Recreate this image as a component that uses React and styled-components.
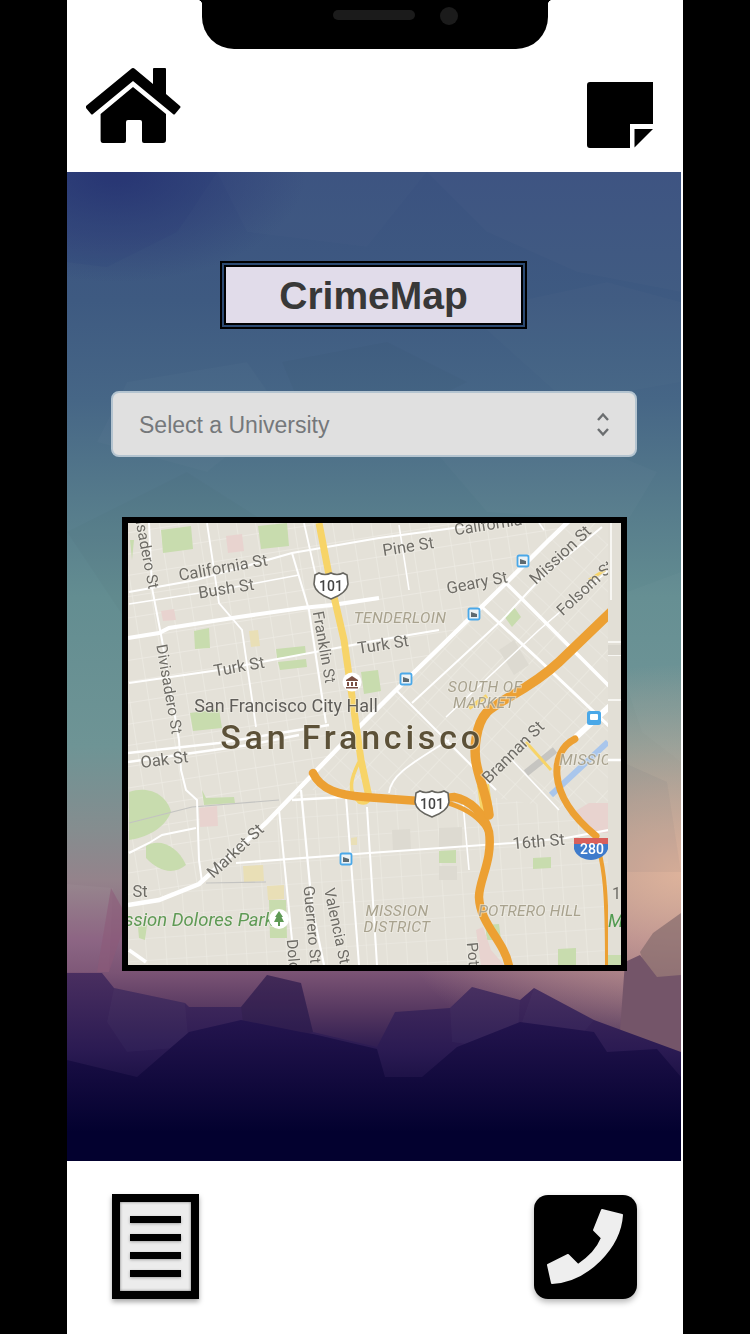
import React from 'react';
import styled, { createGlobalStyle } from 'styled-components';

const GlobalStyle = createGlobalStyle`
  html, body {
    margin: 0;
    padding: 0;
    background: #000;
    font-family: "Liberation Sans", Arial, sans-serif;
  }
`;

const Page = styled.div`
  width: 750px;
  height: 1334px;
  background: #000;
  display: flex;
  justify-content: center;
  overflow: hidden;
`;

const Screen = styled.div`
  position: relative;
  width: 616px;
  height: 1334px;
  background: #fff;
  display: flex;
  flex-direction: column;
`;

const Notch = styled.div`
  position: absolute;
  top: 0;
  left: 135px;
  width: 346px;
  height: 49px;
  background: #000;
  border-radius: 0 0 32px 32px;
  display: flex;
  justify-content: center;
  align-items: flex-start;
  gap: 25px;
  box-sizing: border-box;
  padding: 7px 0 0 40px;

  &::before,
  &::after {
    content: '';
    position: absolute;
    top: 0;
    width: 5px;
    height: 5px;
    background: radial-gradient(circle at 0 100%, transparent 5px, #000 5.5px);
  }
  &::before {
    left: -5px;
  }
  &::after {
    right: -5px;
    transform: scaleX(-1);
  }
`;

const Speaker = styled.div`
  width: 82px;
  height: 10px;
  margin-top: 3px;
  border-radius: 5px;
  background: #1b1b1b;
`;

const Camera = styled.div`
  width: 18px;
  height: 18px;
  border-radius: 50%;
  background: #1b1b1b;
`;

const Header = styled.header`
  height: 172px;
  box-sizing: border-box;
  padding: 67px 30px 0 19px;
  display: flex;
  justify-content: space-between;
  align-items: flex-start;
`;

const HomeIcon = styled.svg`
  display: block;
  width: 95px;
  height: 77px;
`;

const NoteIcon = styled.svg`
  display: block;
  width: 66px;
  height: 66px;
  margin-top: 15px;
`;

const Panel = styled.main`
  position: relative;
  width: 614px;
  height: 989px;
  box-sizing: border-box;
  padding-top: 93px;
  display: flex;
  flex-direction: column;
  align-items: center;
  overflow: hidden;
  background:
    radial-gradient(ellipse 300px 210px at 100% 71%, rgba(221, 178, 155, 1), rgba(221, 178, 155, 0)),
    radial-gradient(ellipse 190px 110px at 8% 0%, rgba(38, 50, 114, 0.85), rgba(38, 50, 114, 0)),
    linear-gradient(
      180deg,
      #3b5280 0%,
      #3e5a81 13%,
      #466686 23%,
      #557a8b 33%,
      #638d91 43%,
      #6e9495 58%,
      #858d8f 66.5%,
      #94838b 71.6%,
      #8a6180 77.6%,
      #7a5374 81%,
      #54365f 85%,
      #2b1a50 89%,
      #0e0840 93%,
      #03012f 97%,
      #02012c 100%
    );
`;

const Backdrop = styled.svg`
  position: absolute;
  top: 0;
  left: 0;
  width: 614px;
  height: 989px;
`;

const Title = styled.h1`
  position: relative;
  width: 299px;
  height: 60px;
  margin: 0 1px 66px 0;
  box-sizing: border-box;
  border: 2px solid #000;
  box-shadow: 0 0 0 2px #2c4a72, 0 0 0 4px #000;
  background: #e1dcea;
  color: #383838;
  font-size: 39px;
  line-height: 58px;
  font-weight: 700;
  text-align: center;
`;

const SelectWrap = styled.div`
  position: relative;
  width: 526px;
  height: 66px;
  margin-bottom: 60px;
`;

const Select = styled.select`
  display: block;
  width: 100%;
  height: 100%;
  box-sizing: border-box;
  padding: 2px 0 0 26px;
  appearance: none;
  border: 2px solid #b4c4d0;
  border-radius: 8px;
  background: #e0e0e0;
  color: #75787b;
  font-family: "Liberation Sans", Arial, sans-serif;
  font-size: 23px;
`;

const Chevrons = styled.svg`
  position: absolute;
  top: 21px;
  right: 27px;
  width: 14px;
  height: 25px;
  pointer-events: none;
`;

const MapFrame = styled.div`
  position: relative;
  width: 505px;
  height: 454px;
  box-sizing: border-box;
  border: 6px solid #000;
  overflow: hidden;
  background: #e4e1d8;
`;

const MapArt = styled.svg`
  display: block;
  width: 493px;
  height: 442px;
  filter: blur(0.7px);
`;

const Label = styled.text`
  font-family: Roboto, "Liberation Sans", sans-serif;
  font-size: ${(p) => p.$size || 16}px;
  fill: ${(p) => p.$color || '#6e6c66'};
  font-style: ${(p) => (p.$italic ? 'italic' : 'normal')};
  font-weight: ${(p) => p.$weight || 400};
  letter-spacing: ${(p) => p.$spacing || 0}px;
  ${(p) => p.$halo && 'stroke: rgba(240, 238, 232, 0.55); stroke-width: 2px; paint-order: stroke;'}
`;

const Footer = styled.footer`
  flex: 1;
  box-sizing: border-box;
  padding: 33px 46px 0 45px;
  display: flex;
  justify-content: space-between;
  align-items: flex-start;
`;

const DocIcon = styled.div`
  width: 87px;
  height: 105px;
  box-sizing: border-box;
  border: 8px solid #000;
  background: #ececec;
  box-shadow: 0 3px 5px rgba(0, 0, 0, 0.35), inset 0 0 3px rgba(0, 0, 0, 0.5);
  display: flex;
  flex-direction: column;
  align-items: center;
  gap: 11px;
  padding-top: 14px;
`;

const DocBar = styled.div`
  width: 51px;
  height: 7px;
  background: #000;
  box-shadow: 0 1px 3px rgba(0, 0, 0, 0.3);
`;

const PhoneButton = styled.div`
  width: 103px;
  height: 104px;
  margin-top: 1px;
  border-radius: 14px;
  background: #000;
  box-shadow: 0 3px 6px rgba(0, 0, 0, 0.3);
`;

const PhoneGlyph = styled.svg`
  display: block;
  width: 103px;
  height: 104px;
`;

const FACETS = [
  ['0,0 150,0 110,60 40,95 0,90', 'rgba(30,40,110,0.07)'],
  ['150,0 360,0 300,75 180,60', 'rgba(255,255,255,0.012)'],
  ['360,0 614,0 614,120 510,100 420,60', 'rgba(255,255,255,0.015)'],
  ['60,210 180,190 215,240 140,300 30,270', 'rgba(255,255,255,0.018)'],
  ['215,190 320,170 400,210 340,240 240,250', 'rgba(0,0,0,0.02)'],
  ['400,140 540,110 614,130 614,210 500,230', 'rgba(255,255,255,0.014)'],
  ['0,360 120,300 230,370 190,430 60,450', 'rgba(0,0,0,0.015)'],
  ['360,270 470,250 590,300 560,350 420,340', 'rgba(255,255,255,0.018)'],
  ['560,420 614,400 614,590 575,560 555,500', 'rgba(255,255,255,0.025)'],
  ['555,590 600,610 614,700 560,700 550,640', 'rgba(60,90,95,0.06)'],
];

const MOUNTAINS = [
  ['0,712 46,716 42,800 0,800', 'rgba(255,255,255,0.03)'],
  ['44,716 60,745 42,800 30,800', 'rgba(140,90,120,0.55)'],
  ['573,780 586,761 614,741 614,830 590,830', 'rgba(135,108,110,0.72)'],
  ['558,790 573,783 590,805 614,803 614,900 550,900', '#745569'],
];

const RIDGE =
  '0,801 35,801 47,816 118,831 122,835 174,835 200,803 234,811 246,860 310,875 328,840 383,836 405,815 453,828 467,816 527,848 614,880 614,989 0,989';
const LOWER_RIDGE =
  '0,888 70,905 122,860 174,848 234,860 246,862 310,877 318,905 355,905 390,875 453,850 527,860 540,880 590,877 614,905 614,989 0,989';
const RIDGE_SHARDS = [
  ['47,816 118,831 122,875 60,880 40,850', 'rgba(255,255,255,0.025)'],
  ['383,836 405,815 453,828 450,880 385,870', 'rgba(255,255,255,0.025)'],
  ['200,803 234,811 246,860 180,880 174,835', 'rgba(0,0,0,0.08)'],
  ['467,816 527,848 500,880 455,850', 'rgba(255,255,255,0.02)'],
];

const Y_PARKS = [
  'M162 530 L192 526 L194 549 L164 553Z',
  'M259 526 L288 523 L290 546 L262 549Z',
  'M195 631 L210 628 L211 648 L196 649Z',
  'M277 649 L306 646 L307 655 L278 658Z',
  'M279 662 L307 659 L308 667 L281 670Z',
  'M191 713 L220 709 L223 728 L194 731Z',
  'M362 672 L379 670 L382 691 L365 694Z',
  'M515 607 L522 617 L513 627 L505 616Z',
  'M130 792 C150 785 168 795 172 812 C165 830 145 838 130 840Z',
  'M203 790 L207 798 L235 797 L236 803 L205 805Z',
  'M147 846 C160 838 178 845 187 865 C175 875 160 872 147 858Z',
  'M270 900 L287 900 L288 938 L271 938Z',
  'M440 851 L457 850 L457 863 L440 863Z',
  'M534 858 L552 857 L552 868 L534 869Z',
  'M559 949 L577 948 L577 965 L559 965Z',
  'M486 925 L500 924 L502 940 L488 940Z',
  'M131 540 L135 540 L133 560Z',
  'M139 927 L148 925 L146 940 L140 938Z',
];

const PINK_BLOCKS = [
  'M227 536 L243 534 L245 551 L229 553Z',
  'M162 611 L175 609 L177 620 L164 621Z',
  'M200 808 L218 806 L219 826 L201 827Z',
  'M570 815 L590 803 L609 803 L609 833 L592 833Z',
  'M477 930 L484 927 L492 950 L505 965 L482 965Z',
];

const TAN_BLOCKS = [
  'M250 631 L259 630 L261 646 L252 647Z',
  'M244 866 L264 865 L265 881 L245 882Z',
  'M268 886 L285 885 L285 899 L269 900Z',
  'M352 838 L358 837 L358 845 L352 845Z',
];

const GRAY_BLOCKS = [
  'M393 830 L411 829 L412 850 L394 850Z',
  'M440 828 L463 827 L463 848 L440 848Z',
  'M440 866 L458 866 L458 880 L440 880Z',
  'M500 650 L515 640 L530 665 L515 675Z',
];

const MAJOR_ROADS = [
  { d: 'M129 905 L160 900 L200 884 L267 823 L340 747 L397 690 L507 583 L550 540 L592 500', w: 4.5 },
  { d: 'M129 638 L160 633 L170 628 L240 617 L303 608 L333 605 L380 598', w: 4 },
  { d: 'M507 583 L567 643 L612 688', w: 3.5 },
  { d: 'M483 607 L537 657 L612 728', w: 3 },
  { d: 'M577 737 L612 705', w: 6 },
  { d: 'M397 690 L497 790', w: 2 },
  { d: 'M129 753 L220 743 L330 725', w: 2.5 },
  { d: 'M129 762 L250 745 L300 735', w: 2.5 },
  { d: 'M130 592 L197 580 L293 553 L380 538 L470 526', w: 2.2 },
  { d: 'M130 604 L220 590 L300 575', w: 1.5 },
  { d: 'M130 683 L220 670 L380 640 L440 630', w: 2 },
  { d: 'M150 523 L153 588 L163 640 L180 740 L182 770 L187 790 L198 800 L200 860 L203 882', w: 2 },
  { d: 'M208 523 L220 603 L243 630 L257 727', w: 1.8 },
  { d: 'M293 553 L310 610 L327 723', w: 2 },
  { d: 'M305 523 L320 590', w: 1.8 },
  { d: 'M280 810 L293 940', w: 2 },
  { d: 'M302 790 L313 907 L325 965', w: 2.2 },
  { d: 'M347 797 L360 965', w: 2 },
  { d: 'M368 807 L378 965', w: 2 },
  { d: 'M237 863 L370 853 L513 843 L567 838 L621 828', w: 2.2 },
  { d: 'M293 800 L380 795', w: 2.5 },
  { d: 'M130 853 L150 843 L163 835 L197 828', w: 2 },
  { d: 'M130 950 L147 962', w: 3.5 },
  { d: 'M413 703 L503 620 L543 577 L603 527', w: 2 },
  { d: 'M447 717 L540 630 L610 570', w: 1.5 },
  { d: 'M390 793 C392 775 410 765 450 740', w: 1.8 },
  { d: 'M513 760 L560 810', w: 1.6 },
  { d: 'M464 803 L470 870', w: 1.6 },
  { d: 'M400 525 L410 590', w: 1.6 },
  { d: 'M540 523 L545 530', w: 1.6 },
];

const GRAY_LINES = [
  'M130 823 L193 807 L280 800',
  'M207 883 L267 882',
];

const ORANGE_ROADS = [
  { d: 'M314 773 C322 790 340 795 365 797 L420 801 L455 797 C470 800 485 812 490 832 C494 860 480 880 480 897 C481 925 505 940 510 966', w: 8.5 },
  { d: 'M612 612 L560 662 C530 690 500 700 488 712 C476 725 475 750 477 762 C480 780 488 795 490 815', w: 9.5 },
  { d: 'M452 804 C470 810 482 820 488 830', w: 5 },
  { d: 'M576 739 C562 746 557 760 558 775 C560 800 580 822 597 836', w: 7 },
  { d: 'M600 850 C605 870 608 890 608 965', w: 4 },
];

const YELLOW_ROADS = [
  { d: 'M320 523 L330 575 L345 640 L362 760 L370 797', w: 7 },
  { d: 'M360 762 C352 778 348 792 360 802 C368 805 372 800 370 794', w: 3.5 },
  { d: 'M484 785 L488 812', w: 12 },
  { d: 'M470 708 L488 696', w: 4 },
  { d: 'M527 742 L552 770', w: 3 },
  { d: 'M590 580 L606 570', w: 3 },
];

const TRANSIT_STOPS = [
  [524, 561],
  [475, 614],
  [407, 679],
  [347, 859],
];

const MAP_LABELS = [
  { text: 'California St', x: 225, y: 573, r: -10, size: 16.5 },
  { text: 'Bush St', x: 228, y: 594, r: -9, size: 16.5 },
  { text: 'Pine St', x: 410, y: 552, r: -9, size: 16.5 },
  { text: 'California', x: 490, y: 530, r: -9, size: 16 },
  { text: 'Geary St', x: 479, y: 588, r: -11, size: 16.5 },
  { text: 'Mission St', x: 565, y: 559, r: -43, size: 16.5 },
  { text: 'Folsom St', x: 590, y: 592, r: -43, size: 16 },
  { text: 'Turk St', x: 385, y: 650, r: -9, size: 16.5 },
  { text: 'Turk St', x: 241, y: 672, r: -10, size: 16.5 },
  { text: 'Divisadero St', x: 165, y: 690, r: 80, size: 15.5 },
  { text: 'Divisadero St', x: 141, y: 545, r: 79, size: 15.5 },
  { text: 'Franklin St', x: 320, y: 648, r: 80, size: 15.5 },
  { text: 'San Francisco City Hall', x: 287, y: 712, size: 18, color: '#5f5d59' },
  { text: 'San Francisco', x: 353, y: 749, size: 34, color: '#5c5138', weight: 500, spacing: 3.8 },
  { text: 'Oak St', x: 166, y: 765, r: -7, size: 16.5 },
  { text: 'Market St', x: 240, y: 855, r: -43, size: 16.5 },
  { text: 'St', x: 141, y: 897, size: 16.5 },
  { text: 'Mission Dolores Park', x: 190, y: 926, size: 18.5, color: '#5f9a55', italic: true },
  { text: 'Guerrero St', x: 308, y: 925, r: 85, size: 15.5 },
  { text: 'Valencia St', x: 333, y: 927, r: 78, size: 15.5 },
  { text: 'Dolores', x: 290, y: 966, r: 85, size: 15.5 },
  { text: 'Potrero', x: 470, y: 968, r: 85, size: 15.5 },
  { text: 'Brannan St', x: 518, y: 756, r: -45, size: 16.5 },
  { text: '16th St', x: 540, y: 847, r: -5, size: 16.5 },
  { text: 'TENDERLOIN', x: 401, y: 623, size: 15.5, color: '#a8a28e', italic: true, spacing: 0.4 },
  { text: 'SOUTH OF', x: 486, y: 692, size: 15.5, color: '#a8a28e', italic: true, spacing: 0.4 },
  { text: 'MARKET', x: 485, y: 708, size: 15.5, color: '#a8a28e', italic: true, spacing: 0.4 },
  { text: 'MISSION', x: 398, y: 916, size: 15.5, color: '#a8a28e', italic: true, spacing: 0.4 },
  { text: 'DISTRICT', x: 398, y: 932, size: 15.5, color: '#a8a28e', italic: true, spacing: 0.4 },
  { text: 'POTRERO HILL', x: 531, y: 916, size: 15.5, color: '#a8a28e', italic: true, spacing: 0.2 },
  { text: 'MISSION', x: 592, y: 765, size: 15.5, color: '#a8a28e', italic: true, spacing: 0.4 },
];

const Shield = ({ x, y }) => (
  <g transform={`translate(${x} ${y})`}>
    <path
      d="M-16 -11 L-12 -13 C-8 -11 -4 -11 0 -13 C4 -11 8 -11 12 -13 L16 -11 L17 -2 C16 6 8 10 0 13 C-8 10 -16 6 -17 -2 Z"
      fill="#fff"
      stroke="#66655f"
      strokeWidth="1.6"
    />
    <Label x={0} y={5} textAnchor="middle" $size={14} $color="#444" $weight={500}>
      101
    </Label>
  </g>
);

const CityMap = () => (
  <MapArt viewBox="129 523 493 442" aria-label="Map of San Francisco">
    <defs>
      <pattern id="gridNorth" width="19" height="21" patternUnits="userSpaceOnUse" patternTransform="rotate(-9)">
        <path d="M0 0 H19 M0 0 V21" stroke="#eeece5" strokeWidth="1.3" fill="none" />
      </pattern>
      <pattern id="gridSoma" width="24" height="17" patternUnits="userSpaceOnUse" patternTransform="rotate(43)">
        <path d="M0 0 H24 M0 0 V17" stroke="#eeece5" strokeWidth="1.2" fill="none" />
      </pattern>
      <pattern id="gridMission" width="20" height="22" patternUnits="userSpaceOnUse" patternTransform="rotate(-4)">
        <path d="M0 0 H20 M0 0 V22" stroke="#eeece5" strokeWidth="1.2" fill="none" />
      </pattern>
      <clipPath id="mainTile">
        <rect x="129" y="523" width="480" height="442" />
      </clipPath>
      <clipPath id="edgeTile">
        <rect x="609" y="523" width="13" height="442" />
      </clipPath>
    </defs>

    <g clipPath="url(#mainTile)">
      <rect x="129" y="523" width="493" height="442" fill="#e4e1d8" />
      <rect x="129" y="523" width="493" height="442" fill="url(#gridMission)" />
      <polygon points="592,500 640,500 640,820 540,805 450,790 300,790" fill="#e4e1d8" />
      <polygon points="592,500 640,500 640,820 540,805 450,790 300,790" fill="url(#gridSoma)" />
      <polygon points="129,500 592,500 267,823 200,884 129,905" fill="#e4e1d8" />
      <polygon points="129,500 592,500 267,823 200,884 129,905" fill="url(#gridNorth)" />

      {GRAY_BLOCKS.map((d) => (
        <path key={d} d={d} fill="#dddad1" />
      ))}
      {Y_PARKS.map((d) => (
        <path key={d} d={d} fill="#c8dcae" />
      ))}
      {PINK_BLOCKS.map((d) => (
        <path key={d} d={d} fill="#e8d3cf" />
      ))}
      {TAN_BLOCKS.map((d) => (
        <path key={d} d={d} fill="#e9dfb6" />
      ))}

      <path d="M552 795 L609 742" stroke="#a9c6ec" strokeWidth="6" fill="none" />
      <path d="M527 773 L556 750" stroke="#c6c5c1" strokeWidth="7" fill="none" />
      {GRAY_LINES.map((d) => (
        <path key={d} d={d} stroke="#c3c3c1" strokeWidth="1.2" fill="none" />
      ))}
      {MAJOR_ROADS.map(({ d, w }) => (
        <path key={d} d={d} stroke="#fff" strokeWidth={w} fill="none" />
      ))}
      {YELLOW_ROADS.map(({ d, w }) => (
        <path key={d} d={d} stroke="#f7d468" strokeWidth={w} fill="none" />
      ))}
      {ORANGE_ROADS.map(({ d, w }) => (
        <path key={d} d={d} stroke="#eca033" strokeWidth={w} strokeLinecap="round" fill="none" />
      ))}

      {MAP_LABELS.map(({ text, x, y, r, size, color, italic, weight, spacing }) => (
        <Label
          key={`${text}${x}`}
          textAnchor="middle"
          transform={`translate(${x} ${y}) rotate(${r || 0})`}
          $size={size}
          $color={color}
          $italic={italic}
          $weight={weight}
          $spacing={spacing}
          $halo
        >
          {text}
        </Label>
      ))}

      <Shield x={332} y={586} />
      <Shield x={433} y={804} />

      <g transform="translate(593 846)">
        <path d="M-18 -8 H16 V-2 H-18Z" fill="#d8605c" />
        <path d="M-18 -2 H16 V3 C14 10 5 14 -1 14 C-8 14 -16 10 -18 3Z" fill="#3e7bcb" />
        <Label x={0} y={8} textAnchor="middle" $size={14} $color="#fff" $weight={500}>
          280
        </Label>
      </g>

      {TRANSIT_STOPS.map(([x, y]) => (
        <g key={x} transform={`translate(${x} ${y})`}>
          <rect x="-5.5" y="-5.5" width="11" height="11" rx="1.5" fill="#eef3f5" stroke="#4aa8e8" strokeWidth="1.8" />
          <path d="M-3 -2 L3 0 V3 H-3Z" fill="#5e6a70" />
        </g>
      ))}
      <g transform="translate(595 718)">
        <rect x="-7" y="-7" width="14" height="14" rx="2.5" fill="#4aa8e8" />
        <rect x="-4" y="-4" width="8" height="6" rx="1" fill="#fff" />
      </g>

      <g transform="translate(353 682)">
        <circle r="9.5" fill="#fff" />
        <path d="M-6 -2 L0 -6 L6 -2 V-1 H-6Z M-5 0 H-3 V4 H-5Z M-1 0 H1 V4 H-1Z M3 0 H5 V4 H3Z M-6 5 H6 V6.5 H-6Z" fill="#7a4f42" />
      </g>

      <g transform="translate(280 919)">
        <circle r="10" fill="#fff" />
        <path d="M0 -8 L4 -2 H2.5 L5 3 H1 V7 H-1 V3 H-5 L-2.5 -2 H-4Z" fill="#5f9a55" />
      </g>
    </g>

    <g clipPath="url(#edgeTile)">
      <rect x="609" y="523" width="13" height="442" fill="#e2dfd6" />
      <path d="M609 642 H622 M609 655 H622 M609 700 H622 M612 523 V600" stroke="#f7f6f2" strokeWidth="2" fill="none" />
      <rect x="609" y="645" width="13" height="10" fill="#d9d6cd" />
      <path d="M609 760 H622" stroke="#fff" strokeWidth="2.5" />
      <Label x={613} y={899} $size={16}>
        17
      </Label>
      <Label x={609} y={927} $size={18} $color="#4f9a4f" $italic>
        M
      </Label>
      <rect x="609" y="955" width="13" height="10" fill="#c8dcae" />
    </g>
  </MapArt>
);

const App = () => (
  <Page>
    <GlobalStyle />
    <Screen>
      <Notch>
        <Speaker />
        <Camera />
      </Notch>

      <Header>
        <HomeIcon viewBox="0 0 95 77" aria-label="Home">
          <path d="M45 2 Q47 0 49 2 L67 17 V2 Q67 1 68 1 H79 Q80 1 80 2 V27 L94 39 Q95 40 94 41 L89 47 Q88 48 87 47 L47 14 L7 47 Q6 48 5 47 L0 41 Q-1 40 0 39 Z" />
          <path d="M47 20 L80 47 V73 Q80 76 77 76 H58 Q56 76 56 74 V55 Q56 53 54 53 H42 Q40 53 40 55 V74 Q40 76 38 76 H17 Q14.6 76 14.6 73 V47 Z" />
        </HomeIcon>
        <NoteIcon viewBox="0 0 66 66" aria-label="Notes">
          <path d="M3 0 H66 V42 H43 V66 H3 Q0 66 0 63 V3 Q0 0 3 0 Z" />
          <path d="M47.5 47 H66 L47.5 65.5 Z" />
        </NoteIcon>
      </Header>

      <Panel>
        <Backdrop viewBox="0 0 614 989" aria-hidden="true">
          <defs>
            <linearGradient id="ridgeFill" gradientUnits="userSpaceOnUse" x1="0" y1="800" x2="0" y2="960">
              <stop offset="0" stopColor="#4a2f60" />
              <stop offset="0.5" stopColor="#2a1a52" />
              <stop offset="1" stopColor="#03012f" />
            </linearGradient>
            <linearGradient id="lowerFill" gradientUnits="userSpaceOnUse" x1="0" y1="850" x2="0" y2="960">
              <stop offset="0" stopColor="#23144d" />
              <stop offset="1" stopColor="#03012f" />
            </linearGradient>
          </defs>
          {FACETS.map(([points, fill]) => (
            <polygon key={points} points={points} fill={fill} />
          ))}
          {MOUNTAINS.map(([points, fill]) => (
            <polygon key={points} points={points} fill={fill} />
          ))}
          <polygon points={RIDGE} fill="url(#ridgeFill)" />
          {RIDGE_SHARDS.map(([points, fill]) => (
            <polygon key={points} points={points} fill={fill} />
          ))}
          <polygon points={LOWER_RIDGE} fill="url(#lowerFill)" />
        </Backdrop>

        <Title>CrimeMap</Title>

        <SelectWrap>
          <Select aria-label="University" defaultValue="">
            <option value="">Select a University</option>
          </Select>
          <Chevrons viewBox="0 0 14 25" aria-hidden="true">
            <path d="M2 8 L7 2.5 L12 8 M2 17 L7 22.5 L12 17" stroke="#6b6e70" strokeWidth="2.4" fill="none" />
          </Chevrons>
        </SelectWrap>

        <MapFrame>
          <CityMap />
        </MapFrame>
      </Panel>

      <Footer>
        <DocIcon aria-label="Reports">
          {[0, 1, 2, 3].map((i) => (
            <DocBar key={i} />
          ))}
        </DocIcon>
        <PhoneButton aria-label="Call">
          <PhoneGlyph viewBox="0 0 103 104">
            <path
              d="M68 15 L88 20 C86 52 54 86 18 88 L14 70 L34 60 L44 70 C55 63 63 55 68 43 L60 35 Z"
              fill="#eeeeee"
              stroke="#eeeeee"
              strokeWidth="2"
              strokeLinejoin="round"
            />
          </PhoneGlyph>
        </PhoneButton>
      </Footer>
    </Screen>
  </Page>
);

export default App;
